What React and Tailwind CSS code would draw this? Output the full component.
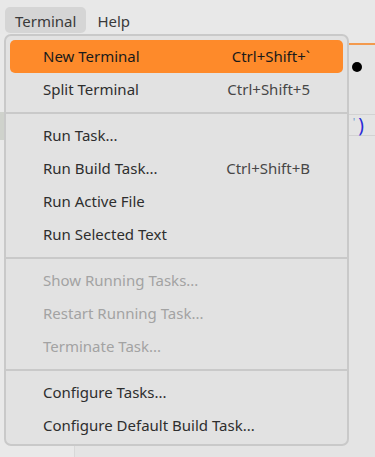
import { Fragment } from 'react';

const groups = [
  [
    { label: 'New Terminal', keys: 'Ctrl+Shift+`', active: true },
    { label: 'Split Terminal', keys: 'Ctrl+Shift+5' },
  ],
  [
    { label: 'Run Task...' },
    { label: 'Run Build Task...', keys: 'Ctrl+Shift+B' },
    { label: 'Run Active File' },
    { label: 'Run Selected Text' },
  ],
  [
    { label: 'Show Running Tasks...', disabled: true },
    { label: 'Restart Running Task...', disabled: true },
    { label: 'Terminate Task...', disabled: true },
  ],
  [
    { label: 'Configure Tasks...' },
    { label: 'Configure Default Build Task...' },
  ],
];

function MenuItem({ item }) {
  const base = 'flex items-center justify-between h-[33px] pl-[33px] pr-[33px] rounded-[5px]';
  if (item.active) {
    return (
      <div className={`${base} bg-[#fe8a2a] text-[#1a1a1a]`}>
        <span>{item.label}</span>
        <span>{item.keys}</span>
      </div>
    );
  }
  return (
    <div className={`${base} ${item.disabled ? 'text-[#a3a3a3]' : 'text-[#2e2e2e]'}`}>
      <span>{item.label}</span>
      {item.keys && <span className="text-[#474747]">{item.keys}</span>}
    </div>
  );
}

export default function App() {
  return (
    <div
      className="relative w-[375px] h-[457px] overflow-hidden bg-[#e8e8e8] text-[15px] leading-none"
      style={{ fontFamily: '"Noto Sans", "Open Sans", sans-serif' }}
    >
      {/* Menu bar */}
      <div className="flex items-start h-[34px] pt-[7px] pl-[5px] text-[#3a3a3a]">
        <div className="flex items-center h-[26px] px-[10px] pt-[3px] rounded-[5px] bg-[#d5d5d5]">Terminal</div>
        <div className="flex items-center h-[26px] px-[11px] pt-[3px]">Help</div>
      </div>

      {/* Workbench behind the menu */}
      <div className="flex h-[423px]">
        <div className="w-[75px] border-r border-[#d8d8d8] bg-[#e9e9e9] pt-[78px]">
          <div className="w-[4px] h-[28px] bg-[#cfd2cc]" />
        </div>
        <div className="flex-1 bg-[#e4e4e4]">
          <div className="h-[9px] bg-[#e8e8e8]" />
          <div className="h-[2px] bg-[#f39a4e]" />
          <div className="flex justify-end h-[69px] pt-[17px] pr-[13px]">
            <div className="w-[10px] h-[10px] rounded-full bg-black" />
          </div>
          <div className="flex items-center justify-end h-[22px] border-y border-[#d2d2d2] pr-[11px] text-[#2b2bd8] text-[19px]">
            <span className="text-[#6b9bd0] text-[11px] mr-[3px] -mt-[7px]">'</span>)
          </div>
        </div>
      </div>

      {/* Dropdown menu */}
      <div className="absolute left-[4px] top-[34px] w-[345px] h-[412px] rounded-[7px] border-2 border-[#c9c9c9] bg-[#e2e2e2] px-[4px] pt-[4px]">
        {groups.map((group, i) => (
          <Fragment key={i}>
            {i > 0 && <div className="-mx-[4px] mt-[6px] mb-[5px] h-[2px] bg-[#c9c9c9]" />}
            {group.map((item) => (
              <MenuItem key={item.label} item={item} />
            ))}
          </Fragment>
        ))}
      </div>
    </div>
  );
}
